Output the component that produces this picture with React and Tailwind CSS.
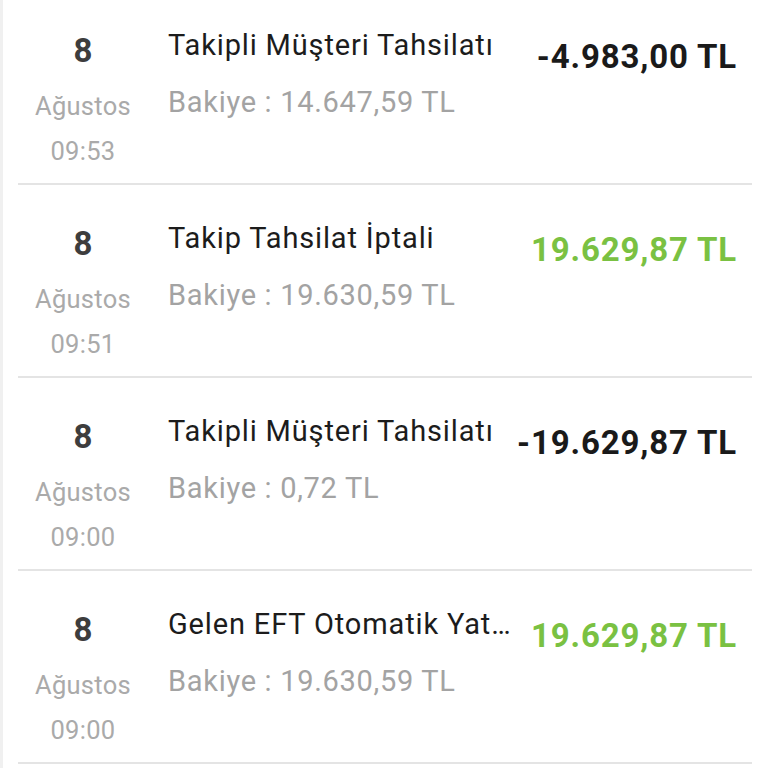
const rows = [
  { day: "8", month: "Ağustos", time: "09:53", title: "Takipli Müşteri Tahsilatı", balance: "14.647,59 TL", amount: "-4.983,00 TL", plus: false },
  { day: "8", month: "Ağustos", time: "09:51", title: "Takip Tahsilat İptali", balance: "19.630,59 TL", amount: "19.629,87 TL", plus: true },
  { day: "8", month: "Ağustos", time: "09:00", title: "Takipli Müşteri Tahsilatı", balance: "0,72 TL", amount: "-19.629,87 TL", plus: false },
  { day: "8", month: "Ağustos", time: "09:00", title: "Gelen EFT Otomatik Yat…", balance: "19.630,59 TL", amount: "19.629,87 TL", plus: true },
];

const Row = ({ row }) => (
  <div className="ml-[15px] mr-[16px] h-[193px] border-b-2 border-[#e4e4e4] flex items-start pt-[33px] pr-[15px]">
    <div className="w-[130px] shrink-0 mt-[6px] flex flex-col items-center">
      <div className="text-[33px] leading-[40px] font-bold text-[#3d3d3d]">{row.day}</div>
      <div className="mt-[13px] text-[25.5px] tracking-[0.3px] leading-[45px] text-[#aaaaaa]">{row.month}</div>
      <div className="text-[25.5px] tracking-[0.3px] leading-[45px] text-[#aaaaaa]">{row.time}</div>
    </div>
    <div className="ml-[20px] flex-1 min-w-0">
      <div className="text-[29px] tracking-[0.85px] leading-[40px] text-[#1c1c1c] whitespace-nowrap">{row.title}</div>
      <div className="mt-[17px] text-[29px] tracking-[0.7px] leading-[40px] text-[#a3a3a3] whitespace-nowrap">
        Bakiye : {row.balance}
      </div>
    </div>
    <div
      className={
        "ml-[10px] shrink-0 mt-[12px] text-[33px] tracking-[0.85px] leading-[40px] font-bold whitespace-nowrap " +
        (row.plus ? "text-[#7ac142]" : "text-[#1a1a1a]")
      }
    >
      {row.amount}
    </div>
  </div>
);

export default function App() {
  return (
    <div className="w-[768px] h-[768px] overflow-hidden bg-white border-l-[3px] border-[#f0f0f0] font-['Roboto',sans-serif]">
      <div className="-mt-[8px]">
        {rows.map((r, i) => (
          <Row key={i} row={r} />
        ))}
      </div>
    </div>
  );
}
